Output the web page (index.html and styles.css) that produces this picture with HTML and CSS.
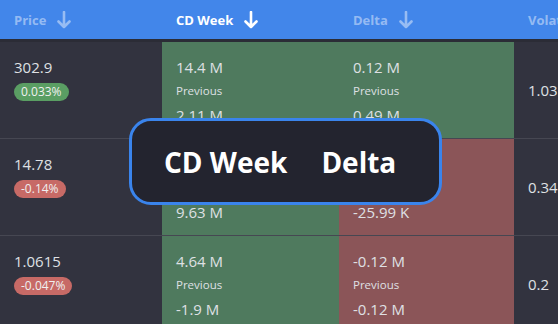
FILE: index.html
```html
<!DOCTYPE html>
<html>
<head>
<meta charset="utf-8">
<link rel="stylesheet" href="styles.css">
</head>
<body>
<div class="table">
  <div class="head">
    <div class="hcell dim">Price <svg class="arrow" viewBox="0 0 14 18"><path d="M7 1v15M1.5 10.5L7 16l5.5-5.5"/></svg></div>
    <div class="hcell active">CD Week <svg class="arrow" viewBox="0 0 14 18"><path d="M7 1v15M1.5 10.5L7 16l5.5-5.5"/></svg></div>
    <div class="hcell dim">Delta <svg class="arrow" viewBox="0 0 14 18"><path d="M7 1v15M1.5 10.5L7 16l5.5-5.5"/></svg></div>
    <div class="hcell dim">Volatility</div>
  </div>
  <div class="row">
    <div class="cell price"><div class="val">302.9</div><span class="badge up">0.033%</span></div>
    <div class="cell pos"><div class="val">14.4 M</div><div class="lbl">Previous</div><div class="val">2.11 M</div></div>
    <div class="cell pos"><div class="val">0.12 M</div><div class="lbl">Previous</div><div class="val">0.49 M</div></div>
    <div class="cell vol">1.03</div>
  </div>
  <div class="row">
    <div class="cell price"><div class="val">14.78</div><span class="badge down">-0.14%</span></div>
    <div class="cell pos"><div class="val">8.1 M</div><div class="lbl">Previous</div><div class="val">9.63 M</div></div>
    <div class="cell neg"><div class="val">-0.12 M</div><div class="lbl">Previous</div><div class="val">-25.99 K</div></div>
    <div class="cell vol">0.34</div>
  </div>
  <div class="row">
    <div class="cell price"><div class="val">1.0615</div><span class="badge down">-0.047%</span></div>
    <div class="cell pos"><div class="val">4.64 M</div><div class="lbl">Previous</div><div class="val">-1.9 M</div></div>
    <div class="cell neg"><div class="val">-0.12 M</div><div class="lbl">Previous</div><div class="val">-0.12 M</div></div>
    <div class="cell vol">0.2</div>
  </div>
  <div class="overlay"><span>CD Week</span><span>Delta</span></div>
</div>
</body>
</html>
```
FILE: styles.css
```css
html, body {
  margin: 0;
  padding: 0;
  background: #32333f;
  overflow: hidden;
}
.table {
  position: relative;
  width: 558px;
  height: 324px;
  overflow: hidden;
  font-family: "Open Sans", "DejaVu Sans", sans-serif;
  color: #dfe0e4;
}
.head, .row {
  display: grid;
  grid-template-columns: 162px 177px 175px 120px;
}
.head {
  height: 39px;
  background: #4286ea;
  border-bottom: 3px solid #2b2c36;
}
.hcell {
  display: flex;
  align-items: center;
  gap: 11px;
  padding-left: 14px;
  font-size: 13px;
  font-weight: 700;
  color: #fff;
  white-space: nowrap;
}
.hcell.dim { color: rgba(255,255,255,0.45); }
.arrow {
  width: 14px;
  height: 18px;
  fill: none;
  stroke: currentColor;
  stroke-width: 2.6;
  stroke-linecap: round;
  stroke-linejoin: round;
}
.row {
  height: 96px;
  border-bottom: 1px solid rgba(255,255,255,0.1);
}
.cell {
  padding: 13px 14px 0 14px;
  overflow: hidden;
  white-space: nowrap;
}
.pos { background: #4f7a5e; }
.neg { background: #8b5558; }
.val { font-size: 15px; line-height: 24px; }
.lbl { font-size: 11.5px; line-height: 24px; }
.badge {
  display: inline-block;
  margin-top: 3px;
  padding: 0 7px;
  height: 18px;
  line-height: 18px;
  border-radius: 9px;
  font-size: 12px;
  color: #f0f0f0;
}
.badge.up { background: #5a9e63; }
.badge.down { background: #c76a66; }
.vol {
  display: flex;
  align-items: center;
  padding-top: 0;
  font-size: 15px;
}
.overlay {
  position: absolute;
  left: 129px;
  top: 118px;
  width: 275px;
  height: 81px;
  padding-left: 32px;
  border: 3px solid #3a84ec;
  border-radius: 22px;
  background: #23242f;
  display: flex;
  align-items: center;
  gap: 34px;
  font-size: 28px;
  font-weight: 700;
  color: #fff;
}
```
